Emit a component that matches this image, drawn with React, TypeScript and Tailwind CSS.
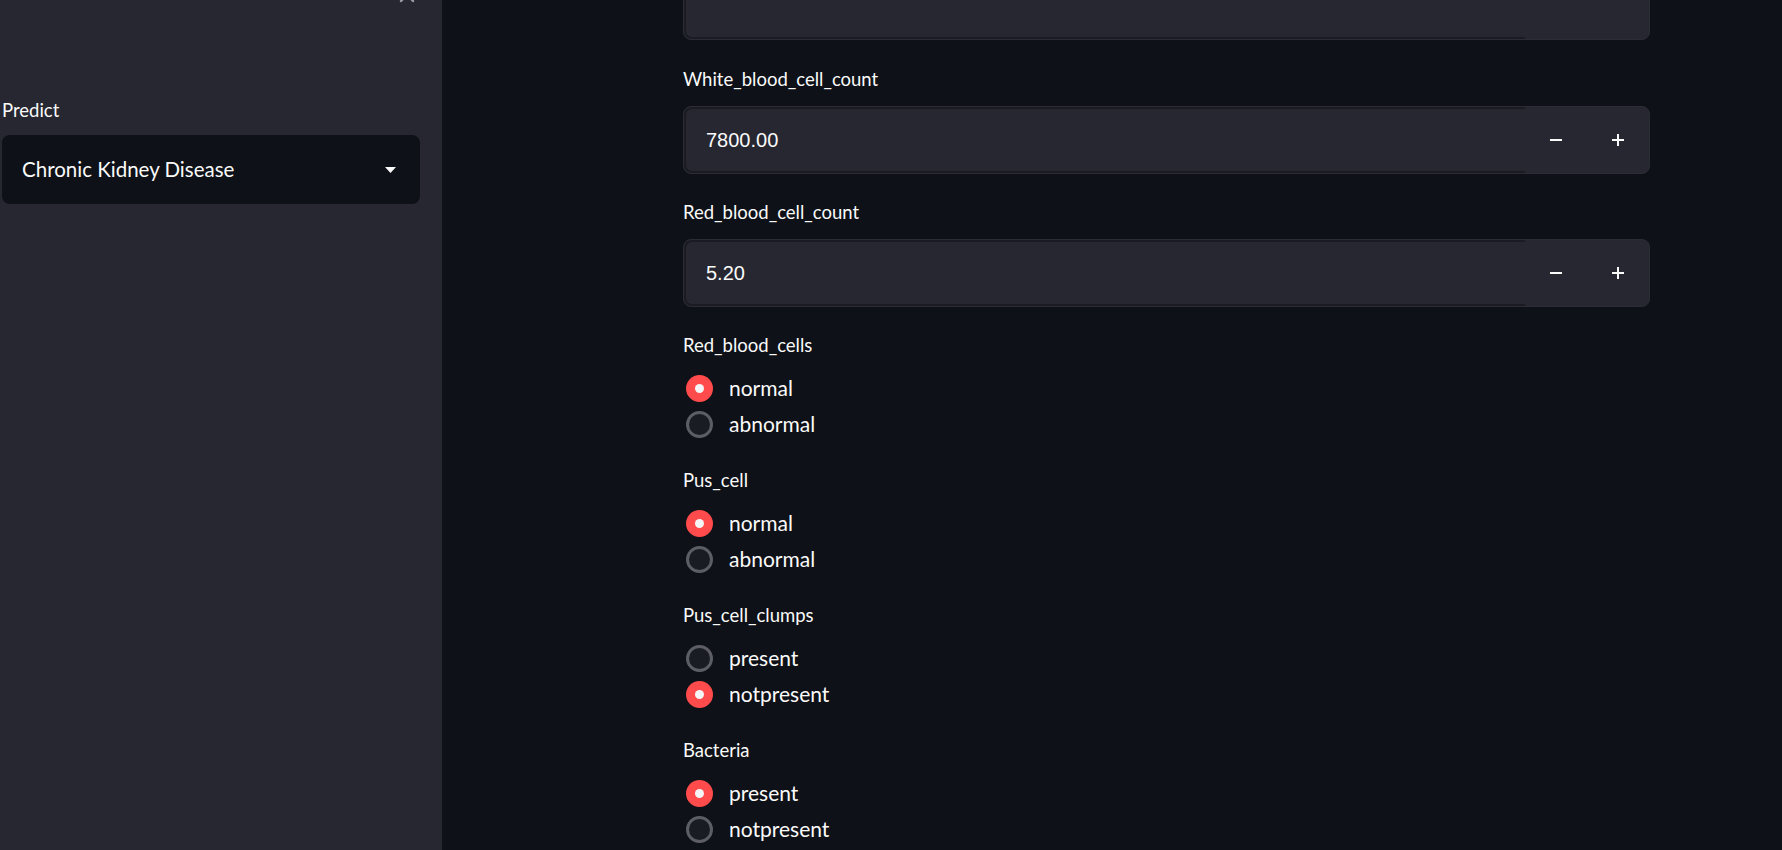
import { useState } from "react";

const font = { fontFamily: "Lato, 'Noto Sans', sans-serif" };

function NumberField({ label, value }: { label: string; value: string }) {
    return (
        <div className="flex flex-col">
            <div className="h-[26px] leading-[26px] text-[18.5px] text-[#fafafa] mb-[14px]">{label}</div>
            <div className="flex h-[68px] rounded-lg bg-[#262730] border border-[#2b2c36] overflow-hidden">
                <div className="flex-1 flex items-center border-y-2 border-l-2 border-[#1b1c23] rounded-l-lg pl-[20px]">
                    <span className="text-[20px] text-[#fafafa] font-medium" style={{ fontFamily: "'Liberation Sans', Arial, sans-serif" }}>{value}</span>
                </div>
                <div className="w-[124px] flex">
                    <button className="w-[62px] flex items-center justify-center">
                        <span className="block w-[12px] h-[2.5px] bg-[#fafafa]" />
                    </button>
                    <button className="w-[62px] flex items-center justify-center relative">
                        <span className="block w-[12px] h-[2.5px] bg-[#fafafa]" />
                        <span className="block absolute w-[2.5px] h-[12px] bg-[#fafafa]" />
                    </button>
                </div>
            </div>
        </div>
    );
}

function RadioGroup({ label, options, initial }: { label: string; options: string[]; initial: number }) {
    const [sel, setSel] = useState(initial);
    return (
        <div className="flex flex-col">
            <div className="h-[26px] leading-[26px] text-[18.5px] text-[#fafafa] mb-[12px]">{label}</div>
            {options.map((o, i) => (
                <div key={o} className="h-[36px] flex items-center pl-[3px] cursor-pointer" onClick={() => setSel(i)}>
                    {sel === i ? (
                        <span className="w-[27px] h-[27px] rounded-full bg-[#ff4b4b] flex items-center justify-center">
                            <span className="w-[9px] h-[9px] rounded-full bg-[#f5f5f7]" />
                        </span>
                    ) : (
                        <span className="w-[27px] h-[27px] rounded-full border-[3px] border-[#5c5d66] bg-[#1a1c23]" />
                    )}
                    <span className="ml-[16px] text-[21px] text-[#fafafa]">{o}</span>
                </div>
            ))}
        </div>
    );
}

export default function App() {
    return (
        <div className="flex w-full h-[850px] overflow-hidden bg-[#0e1117]" style={font}>
            {/* sidebar */}
            <aside className="relative w-[442px] shrink-0 h-full bg-[#262730]">
                <svg className="absolute left-[398px] top-[-14px] w-[18px] h-[17px]" viewBox="0 0 18 17" fill="none" stroke="#9a9ca6" strokeWidth="2.4" strokeLinecap="round">
                    <path d="M3 2 L15 15 M15 2 L3 15" />
                </svg>
                <div className="pt-[97px] pl-[2px] pr-[22px]">
                    <div className="h-[26px] leading-[26px] text-[18.5px] text-[#fafafa] mb-[12px]">Predict</div>
                    <div className="h-[69px] rounded-lg bg-[#0e1117] flex items-center justify-between pl-[20px] pr-[24px]">
                        <span className="text-[20.5px] text-[#fafafa]">Chronic Kidney Disease</span>
                        <svg width="11" height="6" viewBox="0 0 11 6"><path d="M0 0 L11 0 L5.5 6 Z" fill="#fafafa" /></svg>
                    </div>
                </div>
            </aside>

            {/* main */}
            <main className="flex-1 h-full">
                <div className="ml-[241px] w-[967px] -mt-[28px] flex flex-col gap-[25px]">
                    <div className="h-[68px] mb-[1px] rounded-lg bg-[#262730] border border-[#2b2c36] flex overflow-hidden">
                        <div className="flex-1 border-y-2 border-l-2 border-[#1b1c23] rounded-l-lg" />
                        <div className="w-[124px]" />
                    </div>
                    <NumberField label="White_blood_cell_count" value="7800.00" />
                    <NumberField label="Red_blood_cell_count" value="5.20" />
                    <RadioGroup label="Red_blood_cells" options={["normal", "abnormal"]} initial={0} />
                    <RadioGroup label="Pus_cell" options={["normal", "abnormal"]} initial={0} />
                    <RadioGroup label="Pus_cell_clumps" options={["present", "notpresent"]} initial={1} />
                    <RadioGroup label="Bacteria" options={["present", "notpresent"]} initial={0} />
                </div>
            </main>
        </div>
    );
}
